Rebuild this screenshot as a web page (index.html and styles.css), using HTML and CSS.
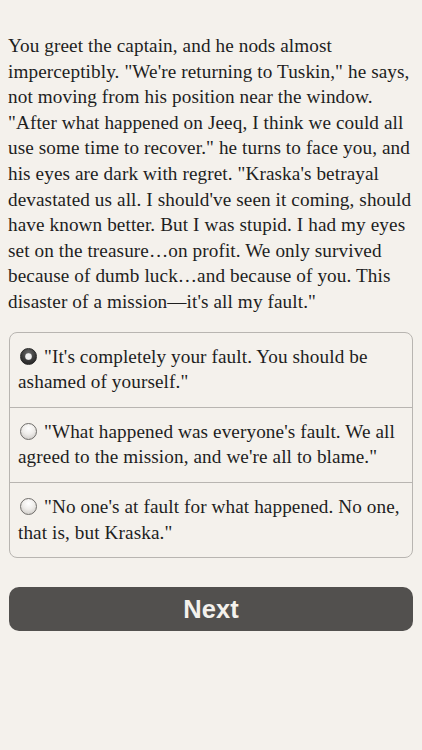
FILE: index.html
```html
<!DOCTYPE html>
<html>
<head>
<meta charset="utf-8">
<link rel="stylesheet" href="styles.css">
</head>
<body>
<main class="page">
  <p class="story">You greet the captain, and he nods almost<br>imperceptibly. "We're returning to Tuskin," he says,<br>not moving from his position near the window.<br>"After what happened on Jeeq, I think we could all<br>use some time to recover." he turns to face you, and<br>his eyes are dark with regret. "Kraska's betrayal<br>devastated us all. I should've seen it coming, should<br>have known better. But I was stupid. I had my eyes<br>set on the treasure…on profit. We only survived<br>because of dumb luck…and because of you. This<br>disaster of a mission—it's all my fault."</p>
  <div class="choices">
    <div class="choice"><span class="radio selected"></span>"It's completely your fault. You should be<br>ashamed of yourself."</div>
    <div class="choice"><span class="radio"></span>"What happened was everyone's fault. We all<br>agreed to the mission, and we're all to blame."</div>
    <div class="choice"><span class="radio"></span>"No one's at fault for what happened. No one,<br>that is, but Kraska."</div>
  </div>
  <button class="next">Next</button>
</main>
</body>
</html>
```
FILE: styles.css
```css
html, body {
  margin: 0;
  padding: 0;
  background: #f4f1ec;
}
.page {
  padding: 33px 9px 0 9px;
  display: flex;
  flex-direction: column;
}
.story {
  margin: 0 0 0 -1px;
  font-family: "Liberation Serif", "Times New Roman", serif;
  font-size: 19.2px;
  letter-spacing: 0.1px;
  line-height: 25.6px;
  color: #1e1e1e;
  white-space: nowrap;
}
.choices {
  margin-top: 17px;
  border: 1px solid #b8b5b1;
  border-radius: 8px;
  overflow: hidden;
}
.choice {
  padding: 11px 8px 12px 8px;
  font-family: "Liberation Serif", "Times New Roman", serif;
  font-size: 19.2px;
  letter-spacing: 0.1px;
  line-height: 25.6px;
  color: #1e1e1e;
  white-space: nowrap;
}
.choice + .choice {
  border-top: 1px solid #b8b5b1;
}
.radio {
  display: inline-block;
  width: 17px;
  height: 17px;
  border-radius: 50%;
  margin: 0 7px 0 2px;
  vertical-align: -2px;
  box-sizing: border-box;
  border: 1px solid #6f6d6a;
  background: radial-gradient(circle at 50% 30%, #ffffff 0%, #efedea 45%, #c4c1bd 100%);
}
.radio.selected {
  border: 1px solid #262626;
  background:
    radial-gradient(circle at 50% 50%, #f0f0f0 0 2.8px, #a0a0a0 3.3px, transparent 4px),
    radial-gradient(circle at 50% 30%, #6a6a6a 0%, #3a3a3a 55%, #1c1c1c 100%);
}
.next {
  margin-top: 29px;
  height: 44px;
  border: none;
  border-radius: 10px;
  background: #52504e;
  color: #f4f1ec;
  font-family: "Liberation Sans", Arial, sans-serif;
  font-weight: bold;
  font-size: 25.5px;
  padding: 0;
}
```
